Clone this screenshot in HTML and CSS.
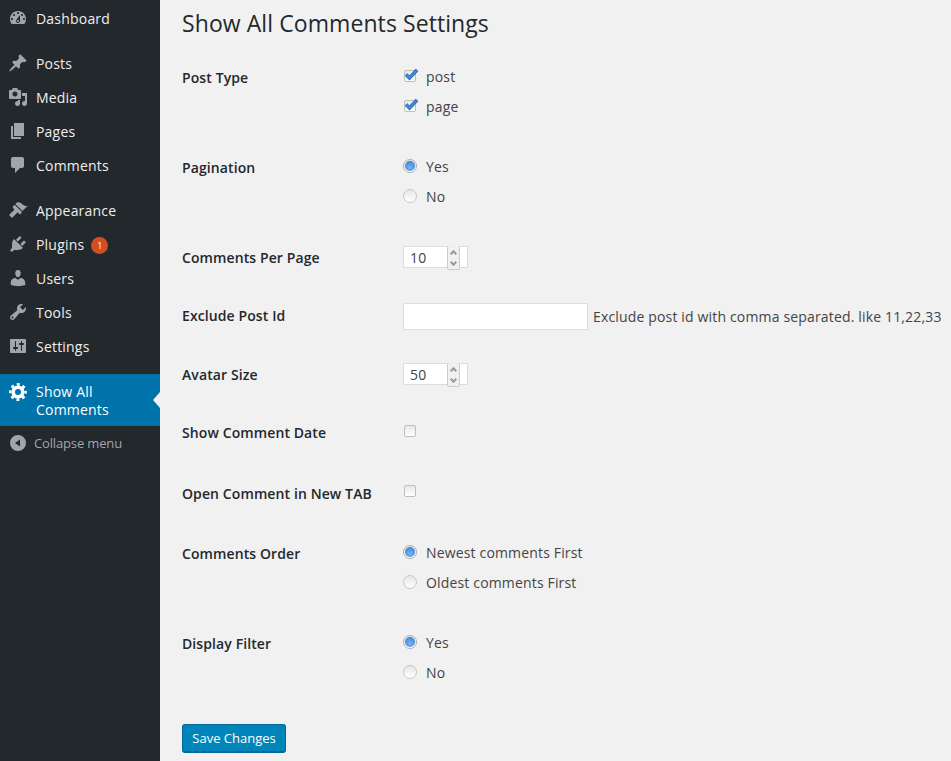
FILE: index.html
```html
<!DOCTYPE html>
<html lang="en">
<head>
	<meta charset="utf-8">
	<title>Show All Comments Settings</title>
	<link rel="stylesheet" href="styles.css">
</head>
<body>
	<nav class="side">
		<a class="item"><svg class="ico" viewBox="0 0 20 20"><path d="M3.76 16h12.48c1.1-1.37 1.76-3.11 1.76-5 0-4.42-3.58-8-8-8s-8 3.58-8 8c0 1.89.66 3.63 1.76 5zM10 4c.55 0 1 .45 1 1s-.45 1-1 1-1-.45-1-1 .45-1 1-1zM6 6c.55 0 1 .45 1 1s-.45 1-1 1-1-.45-1-1 .45-1 1-1zm8 0c.55 0 1 .45 1 1s-.45 1-1 1-1-.45-1-1 .45-1 1-1zm-5.37 5.55L12 7v6c0 1.1-.9 2-2 2s-2-.9-2-2c0-.57.24-1.08.63-1.45zM4 10c.55 0 1 .45 1 1s-.45 1-1 1-1-.45-1-1 .45-1 1-1zm12 0c.55 0 1 .45 1 1s-.45 1-1 1-1-.45-1-1 .45-1 1-1zm-5 3c0-.55-.45-1-1-1s-1 .45-1 1 .45 1 1 1 1-.45 1-1z"/></svg>Dashboard</a>
		<div class="sep"></div>
		<a class="item"><svg class="ico" viewBox="0 0 20 20"><path d="M10.44 3.02l1.82-1.82 6.36 6.35-1.83 1.82c-1.05-.68-2.48-.57-3.41.36l-.75.75c-.92.93-1.04 2.35-.35 3.41l-1.83 1.82-2.41-2.41-2.8 2.79c-.42.42-3.38 2.71-3.8 2.29s1.86-3.39 2.28-3.81l2.79-2.79L4.1 9.36l1.83-1.82c1.05.69 2.48.57 3.41-.36l.75-.75c.93-.92 1.04-2.35.35-3.41z"/></svg>Posts</a>
		<a class="item"><svg class="ico" viewBox="0 0 20 20"><path d="M13 11V4c0-.55-.45-1-1-1h-1.67L9 1H5L3.67 3H2c-.55 0-1 .45-1 1v7c0 .55.45 1 1 1h10c.55 0 1-.45 1-1zM7 4.5c1.38 0 2.5 1.12 2.5 2.5S8.38 9.5 7 9.5 4.5 8.38 4.5 7 5.62 4.5 7 4.5zM14 6h5v10.5c0 1.38-1.12 2.5-2.5 2.5S14 17.88 14 16.5s1.12-2.5 2.5-2.5c.17 0 .34.02.5.05V9h-3V6zm-4 8.05V13h2v3.5c0 1.38-1.12 2.5-2.5 2.5S7 17.88 7 16.5 8.12 14 9.5 14c.17 0 .34.02.5.05z"/></svg>Media</a>
		<a class="item"><svg class="ico" viewBox="0 0 20 20"><path d="M6 15V2h10v13H6zm-1 1h8v2H3V5h2v11z"/></svg>Pages</a>
		<a class="item"><svg class="ico" viewBox="0 0 20 20"><path d="M5 2h9c1.1 0 2 .9 2 2v7c0 1.1-.9 2-2 2h-2l-5 5v-5H5c-1.1 0-2-.9-2-2V4c0-1.1.9-2 2-2z"/></svg>Comments</a>
		<div class="sep"></div>
		<a class="item"><svg class="ico" viewBox="0 0 20 20"><path d="M14.48 11.06L7.41 3.99l1.5-1.5c.5-.56 2.3-.47 3.51.32 1.21.8 1.43 1.28 2.91 2.1 1.18.64 2.45 1.26 4.45.85zm-.71.71L6.7 4.7 4.93 6.47c-.39.39-.39 1.02 0 1.41l1.06 1.06c.39.39.39 1.03 0 1.42-.6.6-1.43 1.15-2.21 1.93-.78.78-2.78 2.78-2.78 2.78l3 3s2.18-2.18 2.96-2.96c.78-.78 1.33-1.61 1.93-2.21.39-.39 1.03-.39 1.42 0l1.06 1.06c.39.39 1.02.39 1.41 0z"/></svg>Appearance</a>
		<a class="item"><svg class="ico" viewBox="0 0 20 20"><path d="M13.11 4.36L9.87 7.6 8 5.73l3.24-3.24c.35-.34 1.05-.2 1.56.32.52.51.66 1.21.31 1.55zm-8 1.77l.91-1.12 9.01 9.01-1.19.84c-.71.71-2.63 1.16-3.82 1.16H6.14L4.9 17.26c-.59.59-1.54.59-2.12 0-.59-.58-.59-1.53 0-2.12l1.24-1.24v-3.88c0-1.13.4-3.19 1.09-3.89zm7.26 3.97l3.24-3.24c.34-.35 1.04-.21 1.55.31.52.51.66 1.21.31 1.55l-3.24 3.25z"/></svg>Plugins<span class="badge">1</span></a>
		<a class="item"><svg class="ico" viewBox="0 0 20 20"><path d="M10 9.25c-2.27 0-2.73-3.44-2.73-3.44C7 4.02 7.82 2 9.97 2c2.16 0 2.98 2.02 2.71 3.81 0 0-.41 3.44-2.68 3.44zm0 2.57L12.72 10c2.39 0 4.52 2.33 4.52 4.53v2.49s-3.65 1.13-7.24 1.13c-3.65 0-7.24-1.13-7.24-1.13v-2.49c0-2.25 1.94-4.48 4.47-4.48z"/></svg>Users</a>
		<a class="item"><svg class="ico" viewBox="0 0 20 20"><path d="M16.68 9.77c-1.34 1.34-3.3 1.67-4.95.99l-5.41 6.52c-.99.99-2.59.99-3.58 0s-.99-2.59 0-3.57l6.52-5.42c-.68-1.65-.35-3.61.99-4.95 1.28-1.28 3.12-1.62 4.72-1.06l-2.89 2.89 2.82 2.82 2.86-2.87c.53 1.58.18 3.4-1.08 4.65zM3.81 16.21c.4.39 1.03.39 1.42 0 .39-.4.39-1.03 0-1.42-.39-.39-1.02-.39-1.42 0-.39.39-.39 1.02 0 1.42z"/></svg>Tools</a>
		<a class="item"><svg class="ico" viewBox="0 0 20 20"><path d="M18 16V4c0-.55-.45-1-1-1H3c-.55 0-1 .45-1 1v12c0 .55.45 1 1 1h14c.55 0 1-.45 1-1zM8 11h1c.55 0 1 .45 1 1s-.45 1-1 1H8v1.5c0 .28-.22.5-.5.5s-.5-.22-.5-.5V13H6c-.55 0-1-.45-1-1s.45-1 1-1h1V5.5c0-.28.22-.5.5-.5s.5.22.5.5V11zm5-2h-1c-.55 0-1-.45-1-1s.45-1 1-1h1V5.500c0-.28.22-.5.5-.5s.5.22.5.5V7h1c.55 0 1 .45 1 1s-.45 1-1 1h-1v5.5c0 .28-.22.5-.5.5s-.5-.22-.5-.5V9z"/></svg>Settings</a>
		<div class="sep"></div>
		<a class="item current"><svg class="ico" viewBox="0 0 20 20"><circle cx="10" cy="10" r="4.8" fill="none" stroke="currentColor" stroke-width="3.6"/><circle cx="10" cy="10" r="7.6" fill="none" stroke="currentColor" stroke-width="2.6" stroke-dasharray="3 2.97" stroke-dashoffset="1.5"/></svg>Show All<br>Comments</a>
		<a class="item collapse"><svg class="ico" viewBox="0 0 20 20"><path fill-rule="evenodd" d="M10 2a8 8 0 1 0 0 16 8 8 0 0 0 0-16zm2 4.500v7L7 10z"/></svg>Collapse menu</a>
	</nav>
	<main class="wrap">
		<h1 class="title">Show All Comments Settings</h1>
		<form class="settings">
			<div class="row multi">
				<div class="lbl">Post Type</div>
				<div class="opts">
					<label class="opt"><span class="cb"><svg viewBox="0 0 15 13"><path class="tick-edge" d="M2 6.500l3.500 3.500 7.500-8"/><path class="tick" d="M2 6.500l3.500 3.500 7.500-8"/></svg></span>post</label>
					<label class="opt"><span class="cb"><svg viewBox="0 0 15 13"><path class="tick-edge" d="M2 6.500l3.500 3.500 7.500-8"/><path class="tick" d="M2 6.500l3.500 3.500 7.500-8"/></svg></span>page</label>
				</div>
			</div>
			<div class="row multi">
				<div class="lbl">Pagination</div>
				<div class="opts">
					<label class="opt"><span class="rd on"></span>Yes</label>
					<label class="opt"><span class="rd"></span>No</label>
				</div>
			</div>
			<div class="row r-count">
				<div class="lbl">Comments Per Page</div>
				<div class="num"><span class="val">10</span><span class="spin"><i class="up"></i><i class="down"></i></span></div>
			</div>
			<div class="row r-exclude">
				<div class="lbl">Exclude Post Id</div>
				<div class="line"><div class="txt"></div><span class="hint">Exclude post id with comma separated. like 11,22,33</span></div>
			</div>
			<div class="row r-avatar">
				<div class="lbl">Avatar Size</div>
				<div class="num"><span class="val">50</span><span class="spin"><i class="up"></i><i class="down"></i></span></div>
			</div>
			<div class="row r-check">
				<div class="lbl">Show Comment Date</div>
				<span class="cb"></span>
			</div>
			<div class="row r-check2">
				<div class="lbl">Open Comment in New TAB</div>
				<span class="cb"></span>
			</div>
			<div class="row multi">
				<div class="lbl">Comments Order</div>
				<div class="opts">
					<label class="opt"><span class="rd on"></span>Newest comments First</label>
					<label class="opt"><span class="rd"></span>Oldest comments First</label>
				</div>
			</div>
			<div class="row multi">
				<div class="lbl">Display Filter</div>
				<div class="opts">
					<label class="opt"><span class="rd on"></span>Yes</label>
					<label class="opt"><span class="rd"></span>No</label>
				</div>
			</div>
			<button class="save" type="button">Save Changes</button>
		</form>
	</main>
</body>
</html>
```

FILE: styles.css
```css
html,body{
	height:100%;
}
body{
	background:#f1f1f1;
	color:#444;
	display:flex;
	font-family:"Open Sans",sans-serif;
	font-size:14px;
	letter-spacing:.16px;
	margin:0;
	overflow:hidden;
}
.side{
	background:#23282d;
	flex:none;
	padding-top:1px;
	width:160px;
}
.item{
	color:#eee;
	display:block;
	height:34px;
	letter-spacing:.2px;
	line-height:36px;
	padding-left:36px;
	position:relative;
}
.ico{
	color:#a0a5aa;
	fill:#a0a5aa;
	height:20px;
	left:8px;
	position:absolute;
	top:7px;
	width:20px;
}
.sep{
	height:11px;
}
.badge{
	background:#d54e21;
	border-radius:50%;
	color:#fff;
	display:inline-block;
	font-size:9px;
	height:17px;
	letter-spacing:0;
	line-height:17px;
	margin-left:7px;
	text-align:center;
	vertical-align:1px;
	width:17px;
}
.current{
	background:#0073aa;
	color:#fff;
	height:43px;
	line-height:18px;
	padding-top:9px;
}
.current .ico{
	color:#fff;
	fill:#fff;
	top:8px;
}
.current::after{
	border:8px solid transparent;
	border-left-width:0;
	border-right-color:#f1f1f1;
	border-right-width:7px;
	content:"";
	position:absolute;
	right:0;
	top:18px;
}
.collapse{
	color:#a0a5aa;
	font-size:13px;
	letter-spacing:-.15px;
	line-height:34px;
	padding-left:34px;
}
.wrap{
	flex:1;
	padding-left:22px;
}
.title{
	color:#23282d;
	font-size:23px;
	font-weight:400;
	letter-spacing:.08px;
	line-height:29px;
	margin:0;
	padding:9px 0 8px;
}
.row{
	align-items:flex-start;
	display:flex;
}
.lbl{
	color:#23282d;
	flex:none;
	font-weight:600;
	letter-spacing:.1px;
	line-height:20px;
	width:221px;
}
.multi{
	height:60px;
	padding:15px 0;
}
.multi .lbl{
	margin-top:7px;
}
.opts{
	display:flex;
	flex-direction:column;
}
.opt{
	align-items:center;
	display:flex;
	height:30px;
}
.cb{
	background:linear-gradient(#e8e8e8,#fff);
	border:1px solid #bcc0bc;
	border-radius:2px;
	box-sizing:border-box;
	display:block;
	flex:none;
	height:12px;
	margin:-1px 10px 0 1px;
	width:12px;
}
.cb svg{
	display:block;
	height:13px;
	margin:-3px 0 0 -1px;
	width:15px;
}
.tick,.tick-edge{
	fill:none;
}
.tick{
	stroke:#3f8ae0;
	stroke-width:2.4;
}
.tick-edge{
	stroke:#27578f;
	stroke-width:3.4;
}
.rd{
	background:linear-gradient(#e6e6e6,#fff);
	border:1px solid #c4c7c4;
	border-radius:50%;
	box-sizing:border-box;
	flex:none;
	height:14px;
	margin:0 9px 0 0;
	position:relative;
	width:14px;
}
.rd.on{
	border-color:#a9aeb4;
}
.rd.on::before{
	background:radial-gradient(circle at 50% 65%,#7ab4f4,#2f76c8);
	border-radius:50%;
	content:"";
	height:10px;
	left:1px;
	position:absolute;
	top:1px;
	width:10px;
}
.r-count,.r-exclude,.r-avatar,.r-check,.r-check2{
	box-sizing:border-box;
}
.r-count{
	height:61px;
	padding-top:20px;
}
.r-exclude{
	height:58px;
	padding-top:16px;
}
.r-avatar{
	height:59px;
	padding-top:18px;
}
.r-check{
	height:58px;
	padding-top:19px;
}
.r-check2{
	height:60px;
	padding-top:22px;
}
.r-count .lbl,.r-avatar .lbl{
	margin-top:2px;
}
.r-exclude .lbl{
	margin-top:3px;
}
.r-check .cb{
	margin-top:2px;
}
.r-check2 .cb{
	margin-top:1px;
}
.num{
	background:#fff;
	border:1px solid #ddd;
	box-sizing:border-box;
	display:flex;
	height:22px;
	justify-content:space-between;
	position:relative;
	width:65px;
}
.val{
	line-height:21px;
	padding-left:6px;
}
.spin{
	background:#f0f0f0;
	border:1px solid #ccc;
	border-radius:2px;
	border-top:0;
	box-sizing:border-box;
	height:24px;
	margin:-1px 7px 0 0;
	width:13px;
}
.spin i{
	display:block;
	height:12px;
	position:relative;
}
.spin i::before{
	border-left:2px solid #999;
	border-top:2px solid #999;
	content:"";
	height:3px;
	left:3px;
	position:absolute;
	top:5px;
	transform:rotate(45deg);
	width:3px;
}
.spin .down::before{
	top:2px;
	transform:rotate(225deg);
}
.line{
	align-items:center;
	display:flex;
}
.txt{
	background:#fff;
	border:1px solid #ddd;
	box-sizing:border-box;
	height:27px;
	margin-right:5px;
	width:185px;
}
.save{
	background:#0085ba;
	border:1px solid #006799;
	border-bottom-width:2px;
	border-radius:3px;
	color:#fff;
	display:block;
	font-family:inherit;
	font-size:13px;
	height:29px;
	letter-spacing:0;
	margin-top:22px;
	padding:0;
	white-space:nowrap;
	width:104px;
}
```
